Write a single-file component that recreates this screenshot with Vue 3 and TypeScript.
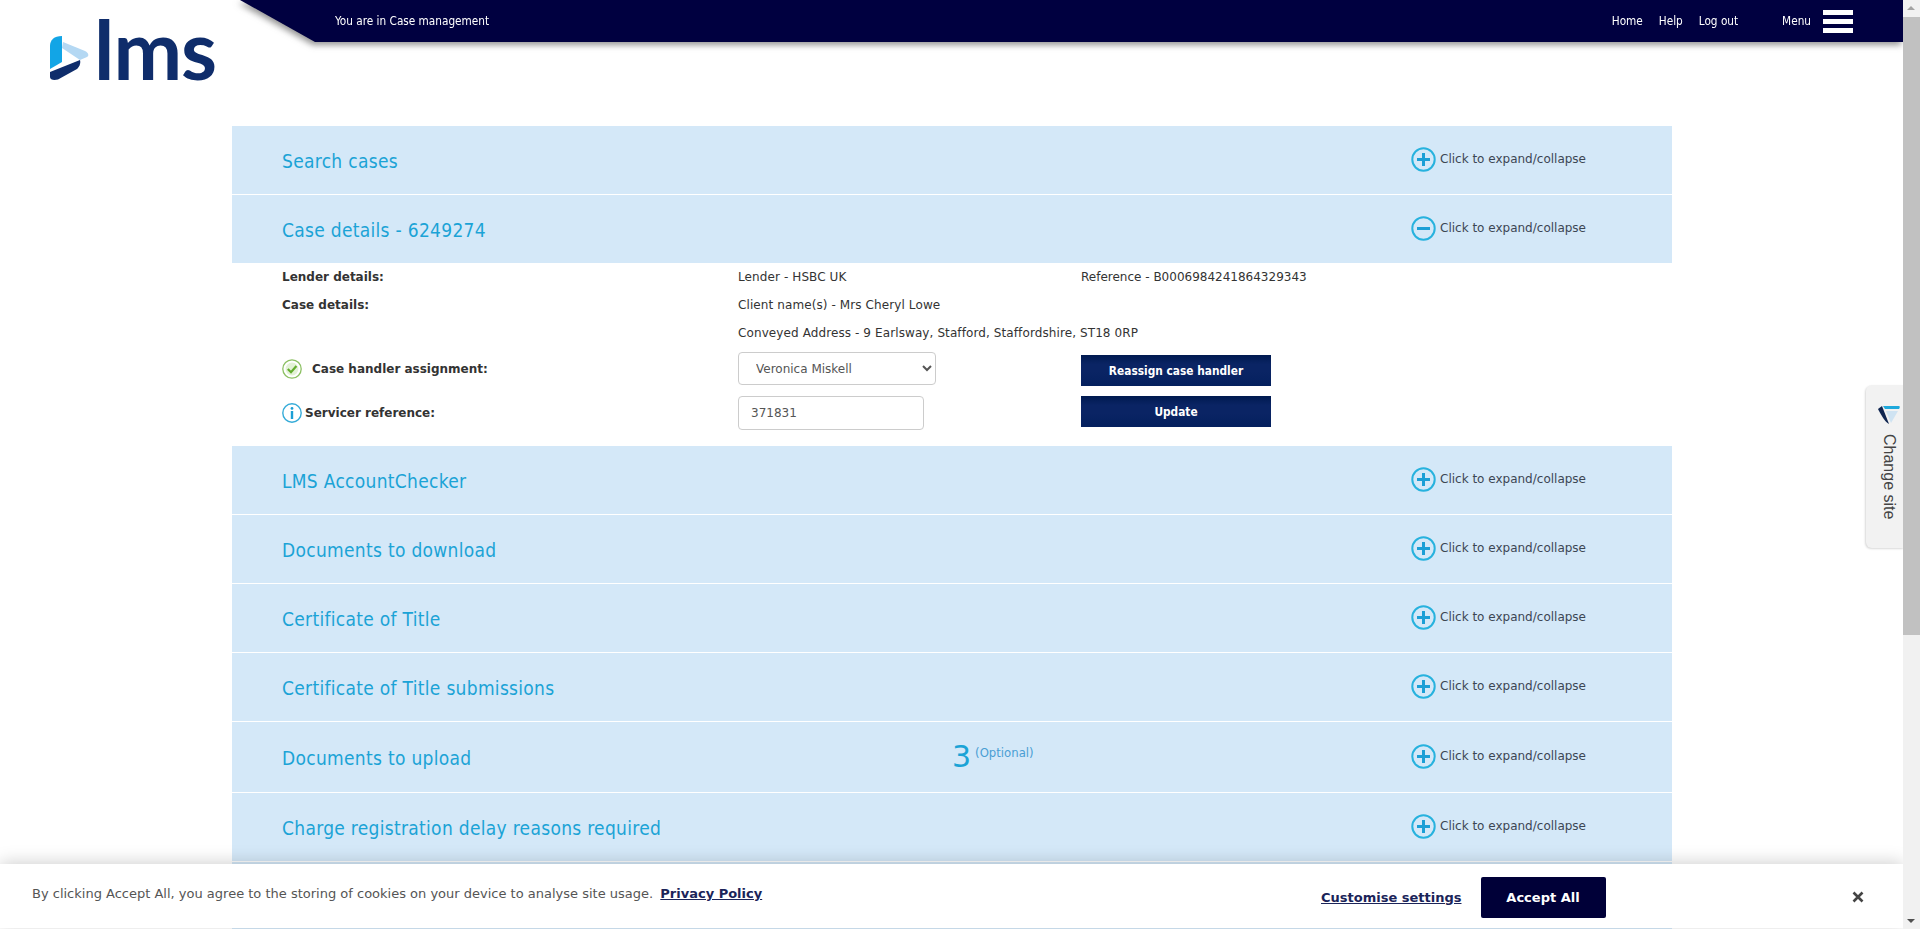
<script setup lang="ts">
interface Section {
  title: string
  open?: boolean
  tall?: boolean
  count?: number
}

const before: Section[] = [
  { title: 'Search cases' },
  { title: 'Case details - 6249274', open: true }
]

const after: Section[] = [
  { title: 'LMS AccountChecker' },
  { title: 'Documents to download' },
  { title: 'Certificate of Title' },
  { title: 'Certificate of Title submissions' },
  { title: 'Documents to upload', tall: true, count: 3 },
  { title: 'Charge registration delay reasons required' }
]
</script>

<template>
  <div class="page">
    <div class="main">
      <header class="top">
        <a class="logo">
          <svg class="logo-mark" width="39" height="45" viewBox="0 0 39 45">
            <path d="M12 0 C4 0 0 4 0 10 V33 L12 26 Z" fill="#12a5e6" />
            <path d="M13 6 L35 15 C39 17 39 20 37 21 L30 24 L12 12 Z" fill="#b4d8f3" />
            <path d="M0 36 L30 24 C31 28 29 31 27 33 L8 43.5 C4 44.5 0 44 0 41 Z" fill="#0f2d6b" />
          </svg>
          <span class="logo-text">lms</span>
        </a>
        <div class="bar-wrap">
          <nav class="bar">
            <span class="where">You are in Case management</span>
            <span class="links">
              <a>Home</a>
              <a>Help</a>
              <a>Log out</a>
            </span>
            <span class="menu">Menu</span>
            <span class="burger"><i></i><i></i><i></i></span>
          </nav>
        </div>
      </header>

      <section class="panels">
        <div v-for="s in before" :key="s.title" class="row">
          <h2 class="row-title">{{ s.title }}</h2>
          <span class="row-count"></span>
          <span class="toggle">
            <svg width="25" height="25" viewBox="0 0 25 25">
              <circle cx="12.5" cy="12.5" r="11.2" fill="none" stroke="#27b2de" stroke-width="2" />
              <path v-if="s.open" d="M6 12.5 H19" stroke="#1b9fd6" stroke-width="3" />
              <path v-else d="M6 12.5 H19 M12.5 6 V19" stroke="#1b9fd6" stroke-width="3" />
            </svg>
            Click to expand/collapse
          </span>
        </div>

        <div class="details">
          <div class="line">
            <b class="label">Lender details:</b>
            <span class="val">Lender - HSBC UK</span>
            <span>Reference - B0006984241864329343</span>
          </div>
          <div class="line">
            <b class="label">Case details:</b>
            <span class="val">Client name(s) - Mrs Cheryl Lowe</span>
          </div>
          <div class="line">
            <span class="label"></span>
            <span class="val">Conveyed Address - 9 Earlsway, Stafford, Staffordshire, ST18 0RP</span>
          </div>
          <div class="line form-line first">
            <b class="label with-check">
              <svg width="20" height="20" viewBox="0 0 20 20">
                <circle cx="10" cy="10" r="9.2" fill="#fff" stroke="#8cc063" stroke-width="1.3" />
                <circle cx="10" cy="10" r="6.4" fill="#e3f2d6" />
                <path d="M5.8 10 L9 13.2 L14.4 7" fill="none" stroke="#63ad2e" stroke-width="2.2" />
              </svg>
              Case handler assignment:
            </b>
            <span class="val">
              <select class="field pick">
                <option>Veronica Miskell</option>
              </select>
            </span>
            <button class="btn">Reassign case handler</button>
          </div>
          <div class="line form-line second">
            <b class="label with-info">
              <svg width="20" height="20" viewBox="0 0 20 20">
                <circle cx="10" cy="10" r="9.2" fill="#fff" stroke="#35abd8" stroke-width="1.4" />
                <circle cx="10" cy="5.4" r="1.4" fill="#1b9fd6" />
                <path d="M10 8 V16" stroke="#1b9fd6" stroke-width="2.4" />
              </svg>
              Servicer reference:
            </b>
            <span class="val">
              <input class="field ref" value="371831" />
            </span>
            <button class="btn">Update</button>
          </div>
        </div>

        <div v-for="s in after" :key="s.title" class="row" :class="{ tall: s.tall }">
          <h2 class="row-title">{{ s.title }}</h2>
          <span class="row-count">
            <template v-if="s.count">
              <span class="num">{{ s.count }}</span>
              <span class="opt">(Optional)</span>
            </template>
          </span>
          <span class="toggle">
            <svg width="25" height="25" viewBox="0 0 25 25">
              <circle cx="12.5" cy="12.5" r="11.2" fill="none" stroke="#27b2de" stroke-width="2" />
              <path d="M6 12.5 H19 M12.5 6 V19" stroke="#1b9fd6" stroke-width="3" />
            </svg>
            Click to expand/collapse
          </span>
        </div>
        <div class="row"></div>
      </section>

      <aside class="site-tab">
        <svg width="24" height="20" viewBox="0 0 24 20">
          <path d="M6 1 H22 C23 1 23 3 22 4 H8 Z" fill="#1fa9dc" />
          <path d="M1 4 L5 1 L12 19 C8 17 4 10 1 4 Z" fill="#0f2550" />
          <path d="M9 6 H21 L14 18 Z" fill="#cfe3f2" />
        </svg>
        <span class="site-label">Change site</span>
      </aside>

      <div class="cookie">
        <p class="cookie-text">
          By clicking Accept All, you agree to the storing of cookies on your device to analyse site usage.
          <a class="policy">Privacy Policy</a>
        </p>
        <a class="customise">Customise settings</a>
        <button class="accept">Accept All</button>
        <svg class="close" width="12" height="12" viewBox="0 0 12 12">
          <path d="M1.5 1.5 L10.5 10.5 M10.5 1.5 L1.5 10.5" stroke="#444" stroke-width="2.6" />
        </svg>
      </div>
    </div>

    <div class="scroll">
      <span class="arrow up"></span>
      <span class="track"><span class="thumb"></span></span>
      <span class="arrow down"></span>
    </div>
  </div>
</template>

<style>
html,
body {
  margin: 0;
  height: 100%;
  overflow: hidden;
  background: #fff;
}
</style>

<style scoped>
.page {
  display: flex;
  height: 929px;
  overflow: hidden;
  font-family: 'DejaVu Sans', Verdana, sans-serif;
  font-size: 12px;
  color: #333;
}

.main {
  position: relative;
  flex: 1;
  min-width: 0;
  overflow: hidden;
}

/* шапка */
.top {
  display: flex;
  height: 126px;
}

.logo {
  display: flex;
  flex: 0 0 230px;
  align-items: flex-start;
  padding: 0 0 0 50px;
  box-sizing: border-box;
}

.logo-mark {
  margin-top: 36px;
  flex: none;
}

.logo-text {
  margin: 7px 0 0 5px;
  font-family: Lato, sans-serif;
  font-size: 82px;
  font-weight: 700;
  line-height: 82px;
  letter-spacing: -1px;
  color: #0f2d6b;
}

.bar-wrap {
  flex: 1;
  height: 42px;
  filter: drop-shadow(-2px 3px 3px rgba(60, 60, 60, 0.55));
}

.bar {
  display: flex;
  align-items: center;
  height: 42px;
  padding-left: 105px;
  padding-right: 50px;
  background: #000040;
  clip-path: polygon(10px 0, 100% 0, 100% 100%, 85px 100%);
  font-family: 'DejaVu Sans Condensed', 'DejaVu Sans', sans-serif;
  font-size: 11.7px;
  color: #fff;
}

.where {
  flex: 1;
}

.links {
  display: flex;
  gap: 16px;
}

.menu {
  margin-left: 44px;
  margin-right: 12px;
}

.burger {
  display: flex;
  flex-direction: column;
  justify-content: space-between;
  width: 30px;
  height: 23px;
}

.burger i {
  display: block;
  height: 5px;
  background: #fff;
}

/* секции */
.panels {
  width: 1440px;
  margin-left: 232px;
}

.row {
  display: flex;
  align-items: center;
  height: 68px;
  margin-bottom: 1px;
  padding-left: 50px;
  background: #d4e8f8;
}

.row.tall {
  height: 70px;
}

.row-title {
  flex: 0 0 671px;
  margin: 2px 0 0;
  font-family: 'DejaVu Sans Condensed', 'DejaVu Sans', sans-serif;
  font-size: 19px;
  font-weight: 400;
  letter-spacing: 0.3px;
  color: #1ba3d6;
}

.row-count {
  display: flex;
  flex: 0 0 458px;
  align-items: flex-start;
  color: #1ba3d6;
}

.num {
  margin-left: -1px;
  font-family: 'DejaVu Sans', sans-serif;
  font-size: 30px;
  line-height: 34px;
}

.opt {
  margin: 5px 0 0 4px;
  font-family: 'DejaVu Sans Condensed', 'DejaVu Sans', sans-serif;
  font-size: 13px;
  color: #4a9ed4;
}

.toggle {
  display: flex;
  align-items: center;
  gap: 4px;
  margin-top: -2px;
  color: #3c4654;
}

/* детали */
.details {
  height: 183px;
  margin-top: -1px;
  background: #fff;
}

.line {
  display: flex;
  align-items: center;
  height: 28px;
  padding-left: 50px;
  white-space: nowrap;
}

.label {
  flex: 0 0 456px;
  color: #333;
}

.val {
  flex: 0 0 343px;
  letter-spacing: 0.1px;
}

.form-line.first {
  height: 43px;
}

.form-line.second {
  height: 46px;
}

.with-check,
.with-info {
  display: flex;
  align-items: center;
}

.with-check {
  gap: 10px;
}

.with-info {
  gap: 3px;
}

.field {
  box-sizing: border-box;
  display: block;
  border: 1px solid #ccc;
  border-radius: 4px;
  background: #fff;
  font-family: 'DejaVu Sans', sans-serif;
  font-size: 12px;
  color: #555;
}

.pick {
  width: 198px;
  height: 33px;
  padding-left: 13px;
}

.ref {
  width: 186px;
  height: 34px;
  padding-left: 12px;
}

.btn {
  align-self: flex-start;
  width: 190px;
  height: 31px;
  margin-top: 8px;
  padding: 0;
  border: 0;
  background: linear-gradient(#001a50 0, #0a2464 30%, #0a2464 55%, #04205e 100%);
  font-family: 'DejaVu Sans Condensed', 'DejaVu Sans', sans-serif;
  font-size: 11.8px;
  font-weight: 700;
  color: #fff;
}

.second .btn {
  margin-top: 6px;
}

/* вкладка справа */
.site-tab {
  position: absolute;
  top: 385px;
  right: -1px;
  display: flex;
  flex-direction: column;
  align-items: center;
  gap: 9px;
  box-sizing: border-box;
  width: 38px;
  height: 163px;
  padding: 20px 0 0 7px;
  border-radius: 6px 0 0 6px;
  background: #f2f2f2;
  box-shadow: -1px 1px 2px rgba(0, 0, 0, 0.15);
}

.site-label {
  writing-mode: vertical-rl;
  font-family: 'Liberation Sans', Arial, sans-serif;
  font-size: 16px;
  color: #444;
}

/* куки */
.cookie {
  position: absolute;
  left: 0;
  right: 0;
  bottom: 1px;
  display: flex;
  align-items: center;
  box-sizing: border-box;
  height: 64px;
  padding: 2px 0 0 32px;
  background: #fff;
  box-shadow: 0 -2px 16px rgba(0, 0, 0, 0.18);
}

.cookie-text {
  flex: 0 0 1289px;
  margin: -7px 0 0;
  font-size: 13px;
  color: #555;
}

.policy {
  margin-left: 3px;
  font-weight: 700;
  color: #1b2459;
  text-decoration: underline;
}

.customise {
  font-size: 13px;
  font-weight: 700;
  color: #1b2459;
  text-decoration: underline;
}

.accept {
  width: 125px;
  height: 41px;
  margin-left: 19px;
  border: 0;
  border-radius: 2px;
  background: #000038;
  font-family: 'DejaVu Sans', sans-serif;
  font-size: 13px;
  font-weight: 700;
  color: #fff;
}

.close {
  margin-left: 246px;
}

/* скроллбар */
.scroll {
  display: flex;
  flex: 0 0 17px;
  flex-direction: column;
  background: #f1f1f1;
}

.arrow {
  position: relative;
  flex: 0 0 17px;
}

.arrow::after {
  content: '';
  position: absolute;
  left: 4px;
  border-left: 4px solid transparent;
  border-right: 4px solid transparent;
}

.arrow.up::after {
  top: 6px;
  border-bottom: 4px solid #a3a3a3;
}

.arrow.down::after {
  top: 7px;
  border-top: 4px solid #505050;
}

.track {
  flex: 1;
}

.thumb {
  display: block;
  height: 618px;
  background: #c1c1c1;
}
</style>
